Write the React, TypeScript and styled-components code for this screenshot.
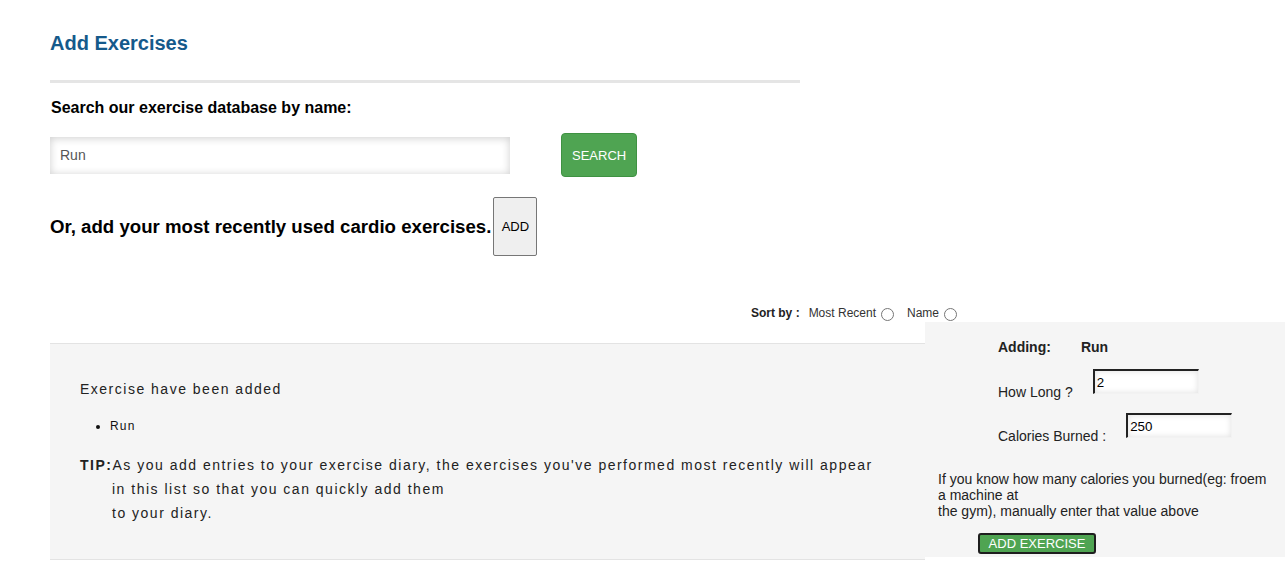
import React from "react";
import styled, { createGlobalStyle } from "styled-components";

const GlobalStyle = createGlobalStyle`
  html, body { margin: 0; padding: 0; background: #ffffff; }
  body { font-family: "Liberation Sans", Arial, sans-serif; color: #222; }
  * { box-sizing: border-box; }
`;

const Page = styled.div`
  width: 1285px;
  padding: 32px 0 0 50px;
`;

const Title = styled.h1`
  margin: 0;
  font-size: 20px;
  line-height: 23px;
  font-weight: bold;
  color: #155a8b;
`;

const Rule = styled.hr`
  margin: 25px 0 0 0;
  width: 750px;
  height: 3px;
  border: none;
  background: #e5e5e5;
`;

const SearchLabel = styled.div`
  margin-top: 16px;
  font-size: 16px;
  line-height: 18px;
  font-weight: bold;
  color: #000;
  padding-left: 1px;
`;

const SearchRow = styled.div`
  margin-top: 16px;
  height: 44px;
  display: flex;
  align-items: center;
  gap: 51px;
`;

const SearchInput = styled.input`
  width: 460px;
  height: 37px;
  border: none;
  outline: none;
  background: #fff;
  box-shadow: inset 0 1px 8px rgba(0, 0, 0, 0.2);
  padding: 0 10px;
  font-family: "Liberation Sans", Arial, sans-serif;
  font-size: 14px;
  color: #555;
`;

const GreenButton = styled.button`
  height: 44px;
  padding: 0 10px;
  border: 1px solid #3f9242;
  border-radius: 4px;
  background: #4fa452;
  color: #fff;
  font-family: "Liberation Sans", Arial, sans-serif;
  font-size: 13px;
  text-transform: uppercase;
`;

const CardioRow = styled.div`
  margin-top: 20px;
  height: 59px;
  display: flex;
  align-items: center;
`;

const CardioText = styled.span`
  font-size: 18.65px;
  font-weight: bold;
  color: #000;
`;

const PlainButton = styled.button`
  height: 59px;
  width: 44px;
  padding: 0;
  margin-left: 2px;
  border: 1px solid #767676;
  border-radius: 2px;
  background: #efefef;
  color: #000;
  font-family: "Liberation Sans", Arial, sans-serif;
  font-size: 13px;
`;

const Lower = styled.div`
  margin-top: 48px;
  display: grid;
  grid-template-columns: 875px 360px;
  grid-template-rows: auto auto;
`;

const SortBar = styled.div`
  grid-column: 1 / -1;
  height: 18px;
  display: flex;
  justify-content: flex-end;
  align-items: flex-end;
  padding-right: 325px;
  font-size: 12px;
  color: #333;
`;

const SortLabel = styled.span<{ $bold?: boolean; $gap: number }>`
  line-height: 14px;
  margin-bottom: 2px;
  margin-left: ${(p) => p.$gap}px;
  font-weight: ${(p) => (p.$bold ? "bold" : "normal")};
  color: ${(p) => (p.$bold ? "#222" : "#333")};
`;

const Radio = styled.span`
  width: 13px;
  height: 13px;
  margin: 0 3px 1px 5px;
  border: 1px solid #767676;
  border-radius: 50%;
  background: #fff;
`;

const MainPanel = styled.div`
  grid-column: 1;
  grid-row: 2;
  margin-top: 21px;
  background: #f5f5f5;
  border-top: 1px solid #e3e3e3;
  border-bottom: 1px solid #e3e3e3;
  padding: 35px 45px 34px 30px;
  font-size: 14px;
  letter-spacing: 1.5px;
  color: #222;
`;

const Notice = styled.p`
  margin: 0;
  line-height: 20px;
`;

const AddedList = styled.ul`
  margin: 19px 0 0 0;
  padding-left: 30px;
  font-size: 12px;
  line-height: 16px;
  letter-spacing: 1.2px;
  color: #111;
`;

const Tip = styled.p`
  margin: 19px 0 0 0;
  line-height: 24px;
  padding-left: 32px;
  text-indent: -32px;
`;

const TipLabel = styled.b`
  color: #222;
`;

const SidePanel = styled.div`
  grid-column: 2;
  grid-row: 2;
  align-self: start;
  background: #f5f5f5;
  padding: 17px 10px 3px 13px;
  font-size: 14px;
  color: #222;
`;

const AddingRow = styled.div`
  margin-left: 60px;
  display: flex;
  line-height: 16px;
  font-weight: bold;
  gap: 30px;
`;

const FieldRow = styled.div<{ $top: number }>`
  margin: ${(p) => p.$top}px 0 0 60px;
  display: flex;
  align-items: flex-end;
`;

const FieldLabel = styled.span`
  line-height: 16px;
  margin-right: 20px;
`;

const SmallInput = styled.input`
  width: 106px;
  height: 25px;
  margin-bottom: 6px;
  padding: 1px 2px 0 2px;
  border-top: 2px solid #222;
  border-left: 2px solid #222;
  border-right: 1px solid #f2f2f2;
  border-bottom: 1px solid #f2f2f2;
  outline: none;
  background: #fff;
  box-shadow: inset 0 0 6px rgba(0, 0, 0, 0.13);
  font-family: "Liberation Sans", Arial, sans-serif;
  font-size: 13.33px;
  color: #000;
`;

const Hint = styled.p`
  margin: 27px 0 0 0;
  width: 334px;
  line-height: 16px;
`;

const SubmitButton = styled.button`
  margin: 14px 0 0 40px;
  height: 21px;
  width: 118px;
  padding: 0;
  border: 2px solid #1e1e1e;
  border-radius: 3px;
  background: #4fa452;
  color: #fff;
  font-family: "Liberation Sans", Arial, sans-serif;
  font-size: 13px;
  line-height: 17px;
  display: block;
`;

export default function App() {
  return (
    <>
      <GlobalStyle />
      <Page>
        <Title>Add Exercises</Title>
        <Rule />
        <SearchLabel>Search our exercise database by name:</SearchLabel>
        <SearchRow>
          <SearchInput defaultValue="Run" />
          <GreenButton>Search</GreenButton>
        </SearchRow>
        <CardioRow>
          <CardioText>Or, add your most recently used cardio exercises.</CardioText>
          <PlainButton>ADD</PlainButton>
        </CardioRow>
        <Lower>
          <SortBar>
            <SortLabel $bold $gap={0}>Sort by :</SortLabel>
            <SortLabel $gap={9}>Most Recent</SortLabel>
            <Radio />
            <SortLabel $gap={10}>Name</SortLabel>
            <Radio />
          </SortBar>
          <MainPanel>
            <Notice>Exercise have been added</Notice>
            <AddedList>
              <li>Run</li>
            </AddedList>
            <Tip>
              <TipLabel>TIP:</TipLabel>As you add entries to your exercise diary, the exercises
              you've performed most recently will appear in this list so that you can quickly add
              them
              <br />
              to your diary.
            </Tip>
          </MainPanel>
          <SidePanel>
            <AddingRow>
              <span>Adding:</span>
              <span>Run</span>
            </AddingRow>
            <FieldRow $top={14}>
              <FieldLabel>How Long ?</FieldLabel>
              <SmallInput defaultValue="2" />
            </FieldRow>
            <FieldRow $top={13}>
              <FieldLabel>Calories Burned :</FieldLabel>
              <SmallInput defaultValue="250" />
            </FieldRow>
            <Hint>
              If you know how many calories you burned(eg: froem a machine at
              <br />
              the gym), manually enter that value above
            </Hint>
            <SubmitButton>ADD EXERCISE</SubmitButton>
          </SidePanel>
        </Lower>
      </Page>
    </>
  );
}
